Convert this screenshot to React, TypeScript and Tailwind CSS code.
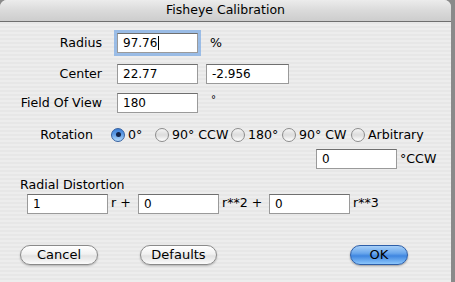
import type { ReactNode } from "react";

const font = "font-['DejaVu_Sans',sans-serif]";

function Field({
  value,
  w = "w-[81px]",
  focused,
}: {
  value: string;
  w?: string;
  focused?: boolean;
}) {
  return (
    <div
      className={`${w} flex h-[20px] shrink-0 items-center border border-[#9a9a9a] border-t-[#6f6f6f] bg-white pl-[5px] text-[12px] text-black ${
        focused ? "shadow-[0_0_0_3px_rgba(120,168,228,0.7)]" : ""
      }`}
    >
      {value}
      {focused && <span className="ml-[1px] h-[14px] w-px bg-black" />}
    </div>
  );
}

function Radio({
  label,
  checked,
  w,
}: {
  label: string;
  checked?: boolean;
  w: string;
}) {
  return (
    <div className={`flex shrink-0 items-center ${w}`}>
      <span
        className={`flex h-[14px] w-[14px] shrink-0 items-center justify-center rounded-full border ${
          checked
            ? "border-[#35609f] bg-[linear-gradient(180deg,#3d7fd6_0%,#5f9de6_45%,#b5dafa_100%)]"
            : "border-[#8c8c8c] bg-[linear-gradient(180deg,#f4f4f4_0%,#dcdcdc_50%,#ffffff_100%)]"
        }`}
      >
        {checked && <span className="h-[5px] w-[5px] rounded-full bg-[#142448]" />}
      </span>
      <span className="ml-[3px] whitespace-nowrap">{label}</span>
    </div>
  );
}

function Button({ children, w, primary }: { children: ReactNode; w: string; primary?: boolean }) {
  return (
    <div
      className={`${w} flex h-[20px] items-center justify-center rounded-full border text-[13px] ${
        primary
          ? "border-[#2d5ea8] bg-[linear-gradient(180deg,#a7cff8_0%,#6aa7ec_40%,#3f86e0_55%,#8cc6fb_100%)] shadow-[0_1px_2px_rgba(0,0,0,0.35)]"
          : "border-[#8a8a8a] bg-[linear-gradient(180deg,#ffffff_0%,#f1f1f1_45%,#e2e2e2_55%,#fbfbfb_100%)] shadow-[0_1px_2px_rgba(0,0,0,0.25)]"
      }`}
    >
      {children}
    </div>
  );
}

export default function App() {
  return (
    <div className={`${font} h-[282px] w-[455px] overflow-hidden bg-[#8a8a8a] text-[12.6px] text-black`}>
      <div className="h-[282px] w-[451px] overflow-hidden rounded-t-[7px] bg-[repeating-linear-gradient(180deg,#ededed_0px,#ededed_2px,#e7e7e7_2px,#e7e7e7_4px)]">
        <div className="flex h-[22px] items-center justify-center border-b border-[#6e6e6e] bg-[linear-gradient(180deg,#ececec_0%,#dadada_50%,#cdcdcd_100%)] text-[12.5px]">
          Fisheye Calibration
        </div>

        <div className="mt-[11px] flex h-[20px] items-center">
          <div className="w-[102px] text-right">Radius</div>
          <div className="ml-[15px]">
            <Field value="97.76" focused />
          </div>
          <div className="ml-[12px]">%</div>
        </div>

        <div className="mt-[11px] flex h-[20px] items-center">
          <div className="w-[102px] text-right">Center</div>
          <div className="ml-[15px] flex gap-[8px]">
            <Field value="22.77" />
            <Field value="-2.956" w="w-[83px]" />
          </div>
        </div>

        <div className="mt-[9px] flex h-[20px] items-center">
          <div className="w-[102px] text-right">Field Of View</div>
          <div className="ml-[15px]">
            <Field value="180" />
          </div>
          <div className="ml-[13px] -mt-[8px] text-[10px]">°</div>
        </div>

        <div className="mt-[12px] flex h-[20px] items-center">
          <div className="w-[93px] text-right">Rotation</div>
          <div className="ml-[18px] flex items-center">
            <Radio label="0°" checked w="w-[44px]" />
            <Radio label="90° CCW" w="w-[76px]" />
            <Radio label="180°" w="w-[51px]" />
            <Radio label="90° CW" w="w-[69px]" />
            <Radio label="Arbitrary" w="w-[80px]" />
          </div>
        </div>

        <div className="mt-[4px] flex h-[20px] items-center pl-[316px]">
          <Field value="0" />
          <div className="ml-[3px]">°CCW</div>
        </div>

        <div className="mt-[9px] pl-[20px] leading-[14px]">Radial Distortion</div>
        <div className="mt-[1px] flex h-[21px] items-center pl-[27px]">
          <Field value="1" />
          <div className="ml-[3px] w-[27px]">r +</div>
          <Field value="0" />
          <div className="ml-[3px] w-[47px]">r**2 +</div>
          <Field value="0" />
          <div className="ml-[3px]">r**3</div>
        </div>

        <div className="mt-[31px] flex items-center pl-[20px]">
          <Button w="w-[78px]">Cancel</Button>
          <div className="ml-[42px]">
            <Button w="w-[77px]">Defaults</Button>
          </div>
          <div className="ml-[133px]">
            <Button w="w-[58px]" primary>
              OK
            </Button>
          </div>
        </div>
      </div>
    </div>
  );
}
